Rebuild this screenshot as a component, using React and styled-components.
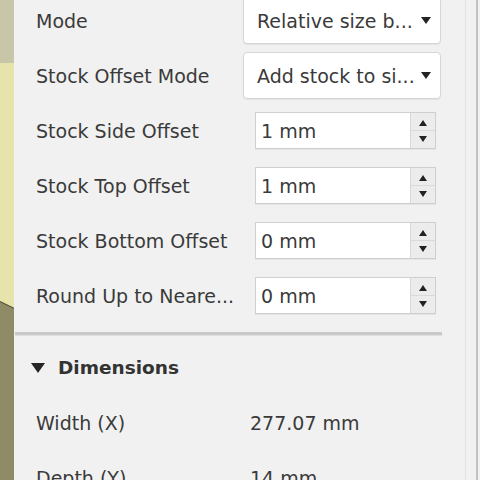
import React from "react";
import styled, { createGlobalStyle } from "styled-components";

const GlobalStyle = createGlobalStyle`
  html, body {
    margin: 0;
    padding: 0;
    height: 100%;
  }
  body {
    font-family: "DejaVu Sans", "Liberation Sans", sans-serif;
    background: #f1f1f1;
    color: #3a3a3a;
    overflow: hidden;
  }
`;

const Page = styled.div`
  display: flex;
  width: 480px;
  height: 480px;
  overflow: hidden;
  background: #f1f1f1;
`;

const Viewport = styled.div`
  width: 14px;
  flex: none;
  svg {
    display: block;
  }
`;

const Panel = styled.div`
  flex: 1;
  display: flex;
  flex-direction: column;
  border-right: 1px solid #e2e2e2;
  padding-left: 1px;
  & > * {
    flex: none;
  }
`;

const Gutter = styled.div`
  width: 12px;
  flex: none;
  display: flex;
  justify-content: flex-end;
  padding-right: 2px;
  &::after {
    content: "";
    width: 2px;
    background: #c2c2c2;
  }
`;

const Rows = styled.div`
  margin-top: -7px;
  display: flex;
  flex-direction: column;
`;

const Row = styled.div`
  display: grid;
  grid-template-columns: ${(p) => (p.$wide ? "207px" : "219px")} 1fr;
  align-items: center;
  height: 55px;
  flex: none;
  padding-left: 21px;
`;

const Label = styled.span`
  font-size: 19px;
  white-space: nowrap;
  color: #3a3a3a;
`;

const Select = styled.div`
  display: flex;
  align-items: center;
  justify-content: space-between;
  width: 198px;
  height: 47px;
  box-sizing: border-box;
  padding: 0 9px 0 13px;
  background: #fff;
  border: 1px solid #d6d6d6;
  border-radius: 4px;
  box-shadow: 0 1px 1px rgba(0, 0, 0, 0.06);
  font-size: 19px;
  color: #3a3a3a;
  white-space: nowrap;
`;

const Caret = styled.span`
  width: 0;
  height: 0;
  border-left: 5px solid transparent;
  border-right: 5px solid transparent;
  border-top: 7px solid #222;
`;

const Spin = styled.div`
  display: flex;
  width: 181px;
  height: 37px;
  box-sizing: border-box;
  background: #fff;
  border: 1px solid #cfcfcf;
  box-shadow: 0 1px 0 rgba(0, 0, 0, 0.05);
`;

const SpinValue = styled.div`
  flex: 1;
  display: flex;
  align-items: center;
  padding-left: 5px;
  font-size: 19px;
  color: #3a3a3a;
`;

const Stepper = styled.div`
  width: 24px;
  display: flex;
  flex-direction: column;
  background: #ececec;
  border-left: 1px solid #d8d8d8;
`;

const Step = styled.div`
  flex: 1;
  display: flex;
  align-items: center;
  justify-content: center;
  & + & {
    border-top: 1px solid #dadada;
  }
  &::before {
    content: "";
    width: 0;
    height: 0;
    border-left: 4px solid transparent;
    border-right: 4px solid transparent;
    ${(p) =>
      p.$up
        ? "border-bottom: 6px solid #222; margin-top: 2px;"
        : "border-top: 6px solid #222; margin-bottom: 2px;"}
  }
`;

const Divider = styled.div`
  width: 427px;
  height: 3px;
  margin-top: 9px;
  background: #c9c9c9;
  border-bottom: 1px solid #dedede;
`;

const SectionHead = styled.div`
  display: flex;
  align-items: center;
  height: 55px;
  margin-top: 4px;
  padding-left: 16px;
  gap: 13px;
  font-size: 18.5px;
  font-weight: bold;
  color: #333;
`;

const Disclosure = styled.span`
  width: 0;
  height: 0;
  border-left: 7px solid transparent;
  border-right: 7px solid transparent;
  border-top: 10px solid #262626;
`;

const Value = styled.span`
  font-size: 19px;
  color: #3a3a3a;
  padding-left: 7px;
  white-space: nowrap;
`;

const Canvas = () => (
  <svg width="14" height="480" viewBox="0 0 14 480">
    <rect x="0" y="0" width="14" height="63" fill="#c8c6a8" />
    <rect x="0" y="63" width="14" height="245" fill="#e6e4aa" />
    <polygon points="0,302 14,309 14,480 0,480" fill="#8f8b66" />
    <line x1="0" y1="301.5" x2="14" y2="308.5" stroke="#55523a" strokeWidth="1.2" />
  </svg>
);

const selects = [
  ["Mode", "Relative size b..."],
  ["Stock Offset Mode", "Add stock to si..."],
];

const spins = [
  ["Stock Side Offset", "1 mm"],
  ["Stock Top Offset", "1 mm"],
  ["Stock Bottom Offset", "0 mm"],
  ["Round Up to Neare...", "0 mm"],
];

const dims = [
  ["Width (X)", "277.07 mm"],
  ["Depth (Y)", "14 mm"],
];

export default function App() {
  return (
    <>
      <GlobalStyle />
      <Page>
        <Viewport>
          <Canvas />
        </Viewport>
        <Panel>
          <Rows>
            {selects.map(([label, value]) => (
              <Row key={label} $wide>
                <Label>{label}</Label>
                <Select>
                  <span>{value}</span>
                  <Caret />
                </Select>
              </Row>
            ))}
            {spins.map(([label, value]) => (
              <Row key={label}>
                <Label>{label}</Label>
                <Spin>
                  <SpinValue>{value}</SpinValue>
                  <Stepper>
                    <Step $up />
                    <Step />
                  </Stepper>
                </Spin>
              </Row>
            ))}
          </Rows>
          <Divider />
          <SectionHead>
            <Disclosure />
            Dimensions
          </SectionHead>
          {dims.map(([label, value]) => (
            <Row key={label} $wide>
              <Label>{label}</Label>
              <Value>{value}</Value>
            </Row>
          ))}
        </Panel>
        <Gutter />
      </Page>
    </>
  );
}
